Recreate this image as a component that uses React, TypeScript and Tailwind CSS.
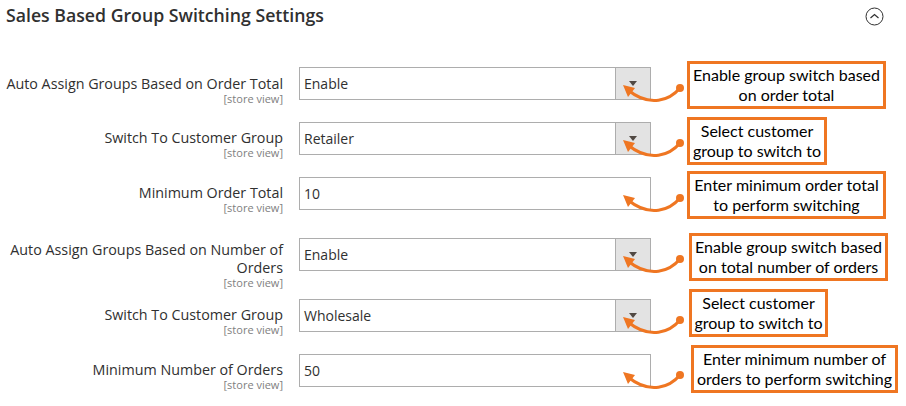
import React from 'react'

interface Row {
  label: string
  kind: 'select' | 'input'
  value: string
  note: string[]
  noteWidth: string
  noteShift: string
  labelPad: string
  height: string
}

const rows: Row[] = [
  {
    label: 'Auto Assign Groups Based on Order Total',
    kind: 'select',
    value: 'Enable',
    note: ['Enable group switch based', 'on order total'],
    noteWidth: 'w-[199px] ml-[36px]',
    noteShift: '-mt-[6px]',
    labelPad: 'pt-[8px]',
    height: 'h-[55px]',
  },
  {
    label: 'Switch To Customer Group',
    kind: 'select',
    value: 'Retailer',
    note: ['Select customer', 'group to switch to'],
    noteWidth: 'w-[140px] ml-[36px]',
    noteShift: '-mt-[5px]',
    labelPad: 'pt-[7px]',
    height: 'h-[55px]',
  },
  {
    label: 'Minimum Order Total',
    kind: 'input',
    value: '10',
    note: ['Enter minimum order total', 'to perform switching'],
    noteWidth: 'w-[199px] ml-[36px]',
    noteShift: '-mt-[6px]',
    labelPad: 'pt-[7px]',
    height: 'h-[61px]',
  },
  {
    label: 'Auto Assign Groups Based on Number of Orders',
    kind: 'select',
    value: 'Enable',
    note: ['Enable group switch based', 'on total number of orders'],
    noteWidth: 'w-[199px] ml-[38px]',
    noteShift: '-mt-[5px]',
    labelPad: 'pt-[3px]',
    height: 'h-[61px]',
  },
  {
    label: 'Switch To Customer Group',
    kind: 'select',
    value: 'Wholesale',
    note: ['Select customer', 'group to switch to'],
    noteWidth: 'w-[139px] ml-[38px]',
    noteShift: '-mt-[10px]',
    labelPad: 'pt-[7px]',
    height: 'h-[55px]',
  },
  {
    label: 'Minimum Number of Orders',
    kind: 'input',
    value: '50',
    note: ['Enter minimum number of', 'orders to perform switching'],
    noteWidth: 'w-[207px] ml-[40px]',
    noteShift: '-mt-[9px]',
    labelPad: 'pt-[7px]',
    height: 'h-[52px]',
  },
]

function Pointer() {
  // curved annotation arrow from the callout dot back to the field
  return (
    <svg
      className="absolute left-[618px] top-[10px] overflow-visible"
      width="70"
      height="30"
      viewBox="0 0 70 30"
    >
      <path
        d="M62 11 C52 23 32 31 10 13"
        fill="none"
        stroke="#ef7622"
        strokeWidth="3"
        strokeLinecap="round"
      />
      <polygon points="5,8 17,11 10,20" fill="#ef7622" />
      <circle cx="62" cy="11" r="4" fill="#ef7622" />
    </svg>
  )
}

function Field({ row }: { row: Row }) {
  return (
    <div className="ml-[16px] flex h-[33px] w-[352px] items-center border border-[#adadad] bg-white">
      <span className="flex-1 pl-[4px] text-[14px] text-[#303030]">{row.value}</span>
      {row.kind === 'select' && (
        <span className="flex h-full w-[35px] items-center justify-center border-l border-[#adadad] bg-[#e3e3e3]">
          <span className="h-0 w-0 border-x-[4px] border-t-[5px] border-x-transparent border-t-[#514943]" />
        </span>
      )}
    </div>
  )
}

function SettingRow({ row }: { row: Row }) {
  return (
    <div className={`relative flex items-start ${row.height}`}>
      <div className={`w-[283px] text-right ${row.labelPad}`}>
        <div className="text-[14.3px] leading-[18px] text-[#303030]">{row.label}</div>
        <div className="text-[11px] leading-[12px] text-[#808080]">[store view]</div>
      </div>
      <Field row={row} />
      <div
        className={`${row.noteWidth} ${row.noteShift} whitespace-nowrap border-[3px] border-[#ef7622] bg-white py-[1px] text-center font-['Lato',sans-serif] text-[16px] leading-[20px] text-black`}
      >
        {row.note.map((line) => (
          <div key={line}>{line}</div>
        ))}
      </div>
      <Pointer />
    </div>
  )
}

export default function App() {
  return (
    <div className="h-[406px] w-[906px] overflow-hidden bg-white font-['Open_Sans',sans-serif]">
      <div className="flex items-center justify-between pl-[6px] pr-[22px] pt-[3px]">
        <h2 className="text-[17.7px] font-semibold leading-[24px] text-[#303030]">
          Sales Based Group Switching Settings
        </h2>
        <svg width="19" height="19" viewBox="0 0 19 19" className="mt-[2px]">
          <circle cx="9.5" cy="9.5" r="8.5" fill="none" stroke="#303030" strokeWidth="1" />
          <path d="M5.5 11 L9.5 7.5 L13.5 11" fill="none" stroke="#303030" strokeWidth="1.2" />
        </svg>
      </div>
      <div className="mt-[40px]">
        {rows.map((row, i) => (
          <SettingRow key={i} row={row} />
        ))}
      </div>
    </div>
  )
}
